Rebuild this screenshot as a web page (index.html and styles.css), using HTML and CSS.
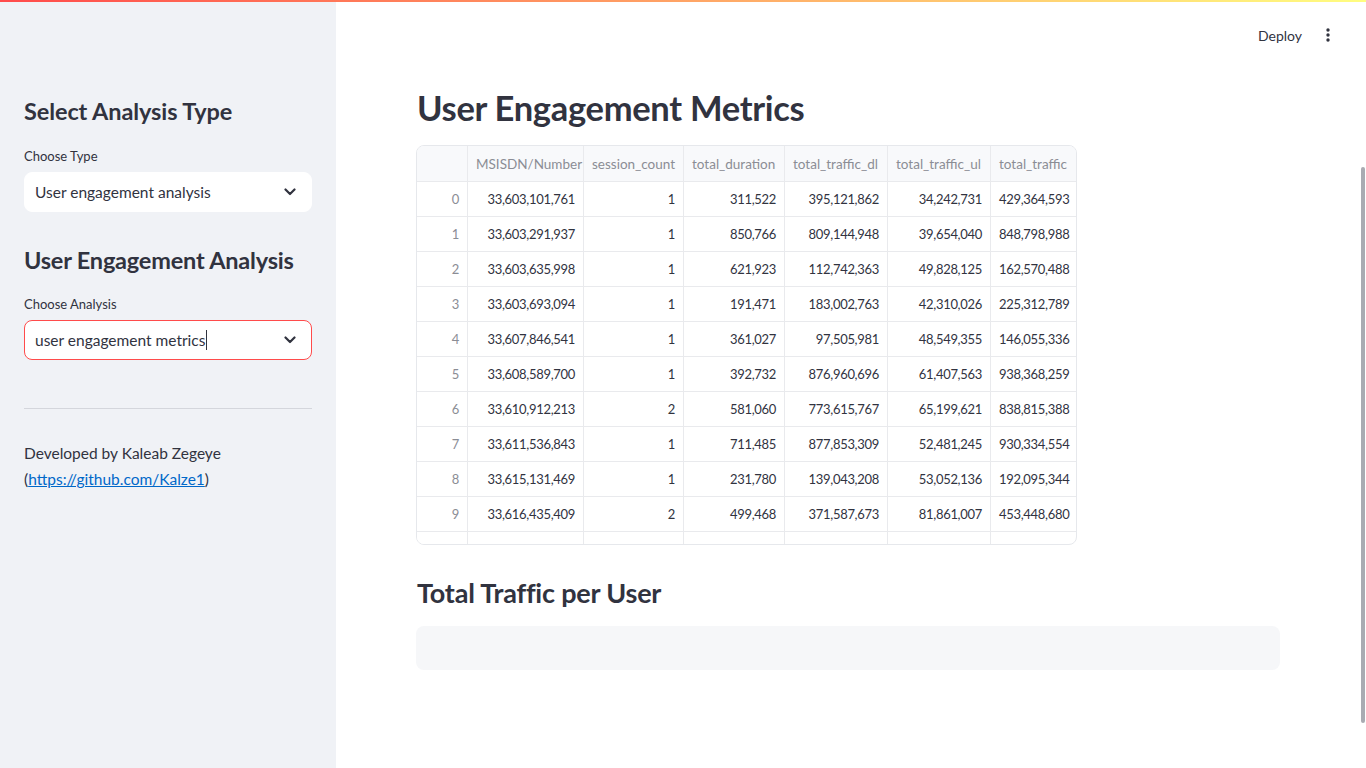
FILE: index.html
```html
<!DOCTYPE html>
<html lang="en">
<head>
<meta charset="utf-8">
<title>User Engagement Metrics</title>
<link rel="stylesheet" href="styles.css">
</head>
<body>
<div class="decoration"></div>
<div class="app">
  <aside class="sidebar">
    <h2 class="side-h">Select Analysis Type</h2>
    <div class="field">
      <label class="label">Choose Type</label>
      <div class="select">
        <span class="select-value">User engagement analysis</span>
        <svg class="chev" width="12" height="8" viewBox="0 0 12 8"><path d="M1.5 1.5 L6 6 L10.5 1.5" fill="none" stroke="#31333f" stroke-width="2.2" stroke-linecap="round" stroke-linejoin="round"/></svg>
      </div>
    </div>
    <h2 class="side-h second">User Engagement Analysis</h2>
    <div class="field field-second">
      <label class="label">Choose Analysis</label>
      <div class="select focused">
        <span class="select-value">user engagement metrics<span class="caret"></span></span>
        <svg class="chev" width="12" height="8" viewBox="0 0 12 8"><path d="M1.5 1.5 L6 6 L10.5 1.5" fill="none" stroke="#31333f" stroke-width="2.2" stroke-linecap="round" stroke-linejoin="round"/></svg>
      </div>
    </div>
    <hr class="divider">
    <p class="credit">Developed by Kaleab Zegeye<br>(<a href="#">https://github.com/Kalze1</a>)</p>
  </aside>
  <main class="main">
    <header class="toolbar">
      <span class="deploy">Deploy</span>
      <svg class="kebab" width="4" height="14" viewBox="0 0 4 14"><circle cx="2" cy="2" r="1.7" fill="#31333f"/><circle cx="2" cy="7" r="1.7" fill="#31333f"/><circle cx="2" cy="12" r="1.7" fill="#31333f"/></svg>
    </header>
    <section class="content">
      <h1 class="title">User Engagement Metrics</h1>
      <div class="grid-wrap">
        <table class="grid">
          <colgroup>
            <col style="width:51px"><col style="width:116px"><col style="width:100px"><col style="width:101px"><col style="width:103px"><col style="width:103px"><col style="width:87px">
          </colgroup>
          <thead>
            <tr><th class="idx"></th><th>MSISDN/Number</th><th>session_count</th><th>total_duration</th><th>total_traffic_dl</th><th>total_traffic_ul</th><th>total_traffic</th></tr>
          </thead>
          <tbody>
            <tr><td class="idx">0</td><td>33,603,101,761</td><td>1</td><td>311,522</td><td>395,121,862</td><td>34,242,731</td><td>429,364,593</td></tr>
            <tr><td class="idx">1</td><td>33,603,291,937</td><td>1</td><td>850,766</td><td>809,144,948</td><td>39,654,040</td><td>848,798,988</td></tr>
            <tr><td class="idx">2</td><td>33,603,635,998</td><td>1</td><td>621,923</td><td>112,742,363</td><td>49,828,125</td><td>162,570,488</td></tr>
            <tr><td class="idx">3</td><td>33,603,693,094</td><td>1</td><td>191,471</td><td>183,002,763</td><td>42,310,026</td><td>225,312,789</td></tr>
            <tr><td class="idx">4</td><td>33,607,846,541</td><td>1</td><td>361,027</td><td>97,505,981</td><td>48,549,355</td><td>146,055,336</td></tr>
            <tr><td class="idx">5</td><td>33,608,589,700</td><td>1</td><td>392,732</td><td>876,960,696</td><td>61,407,563</td><td>938,368,259</td></tr>
            <tr><td class="idx">6</td><td>33,610,912,213</td><td>2</td><td>581,060</td><td>773,615,767</td><td>65,199,621</td><td>838,815,388</td></tr>
            <tr><td class="idx">7</td><td>33,611,536,843</td><td>1</td><td>711,485</td><td>877,853,309</td><td>52,481,245</td><td>930,334,554</td></tr>
            <tr><td class="idx">8</td><td>33,615,131,469</td><td>1</td><td>231,780</td><td>139,043,208</td><td>53,052,136</td><td>192,095,344</td></tr>
            <tr><td class="idx">9</td><td>33,616,435,409</td><td>2</td><td>499,468</td><td>371,587,673</td><td>81,861,007</td><td>453,448,680</td></tr>
            <tr><td class="idx"></td><td></td><td></td><td></td><td></td><td></td><td></td></tr>
          </tbody>
        </table>
      </div>
      <h3 class="subtitle">Total Traffic per User</h3>
      <div class="chart-placeholder"></div>
    </section>
  </main>
</div>
<div class="scrollbar"></div>
</body>
</html>
```

FILE: styles.css
```css
* { box-sizing: border-box; }
html, body {
  margin: 0;
  padding: 0;
  height: 100%;
  overflow: hidden;
}
body {
  font-family: "Source Sans Pro", Lato, "Noto Sans", sans-serif;
  color: #31333f;
  background: #ffffff;
}
.decoration {
  position: fixed;
  top: 0;
  left: 0;
  right: 0;
  height: 2px;
  background: linear-gradient(90deg, #ff4b4b, #fffd80);
  z-index: 10;
}
.app {
  display: flex;
  height: 768px;
}
.sidebar {
  width: 336px;
  flex: 0 0 336px;
  background: #f0f2f6;
  padding: 95px 24px 0 24px;
}
.side-h {
  margin: 0;
  font-size: 23.5px;
  font-weight: 700;
  line-height: 32px;
  letter-spacing: -0.1px;
}
.side-h.second {
  margin-top: 32px;
  letter-spacing: -0.2px;
}
.field {
  margin-top: 20px;
}
.field.field-second {
  margin-top: 19px;
}
.label {
  display: block;
  font-size: 13px;
  line-height: 18px;
  margin-bottom: 7px;
}
.select {
  height: 40px;
  background: #ffffff;
  border: 1px solid #ffffff;
  border-radius: 8px;
  display: flex;
  align-items: center;
  justify-content: space-between;
  padding: 0 15px 0 10px;
}
.select.focused {
  border-color: #ff4b4b;
}
.select-value {
  font-size: 15.5px;
  display: flex;
  align-items: center;
}
.caret {
  display: inline-block;
  width: 1px;
  height: 20px;
  background: #31333f;
  margin-left: 1px;
}
.chev {
  display: block;
}
.divider {
  margin: 48px 0 0 0;
  border: 0;
  border-top: 1px solid #d4d6dc;
}
.credit {
  margin: 31px 0 0 0;
  font-size: 15.5px;
  line-height: 26px;
}
.credit a {
  color: #0068c9;
  text-decoration: underline;
}
.main {
  flex: 1;
  position: relative;
}
.toolbar {
  height: 72px;
  display: flex;
  align-items: center;
  justify-content: flex-end;
  padding: 0 36px 2px 0;
  gap: 24px;
}
.deploy {
  font-size: 14px;
}
.kebab {
  display: block;
}
.content {
  width: 864px;
  margin-left: 80px;
}
.title {
  margin: 14px 0 0 1px;
  font-size: 34.5px;
  font-weight: 700;
  line-height: 44px;
  letter-spacing: -0.3px;
}
.grid-wrap {
  margin-top: 15px;
  width: 661px;
  height: 400px;
  border: 1px solid #e6e8ec;
  border-radius: 8px;
  overflow: hidden;
}
.grid {
  border-collapse: collapse;
  table-layout: fixed;
  width: 661px;
  margin: -1px 0 0 -1px;
  font-size: 13px;
}
.grid th, .grid td {
  border: 1px solid #e9eaed;
  padding: 0 8px;
  white-space: nowrap;
  overflow: hidden;
}
.grid th {
  height: 36px;
  background: #f8f9fb;
  color: #8b8d95;
  font-weight: 400;
  font-size: 13.5px;
  text-align: left;
}
.grid td {
  height: 35px;
  text-align: right;
  letter-spacing: -0.3px;
}
.grid .idx {
  color: #8b8d95;
  text-align: right;
  background: #ffffff;
}
.grid th.idx {
  background: #f8f9fb;
}
.subtitle {
  margin: 30px 0 0 1px;
  font-size: 27px;
  font-weight: 700;
  line-height: 36px;
  letter-spacing: -0.2px;
}
.chart-placeholder {
  margin-top: 15px;
  height: 44px;
  background: #f6f7f9;
  border-radius: 8px;
}
.scrollbar {
  position: fixed;
  right: 1px;
  top: 167px;
  width: 4px;
  height: 556px;
  border-radius: 2px;
  background: #a9abb2;
}
```
